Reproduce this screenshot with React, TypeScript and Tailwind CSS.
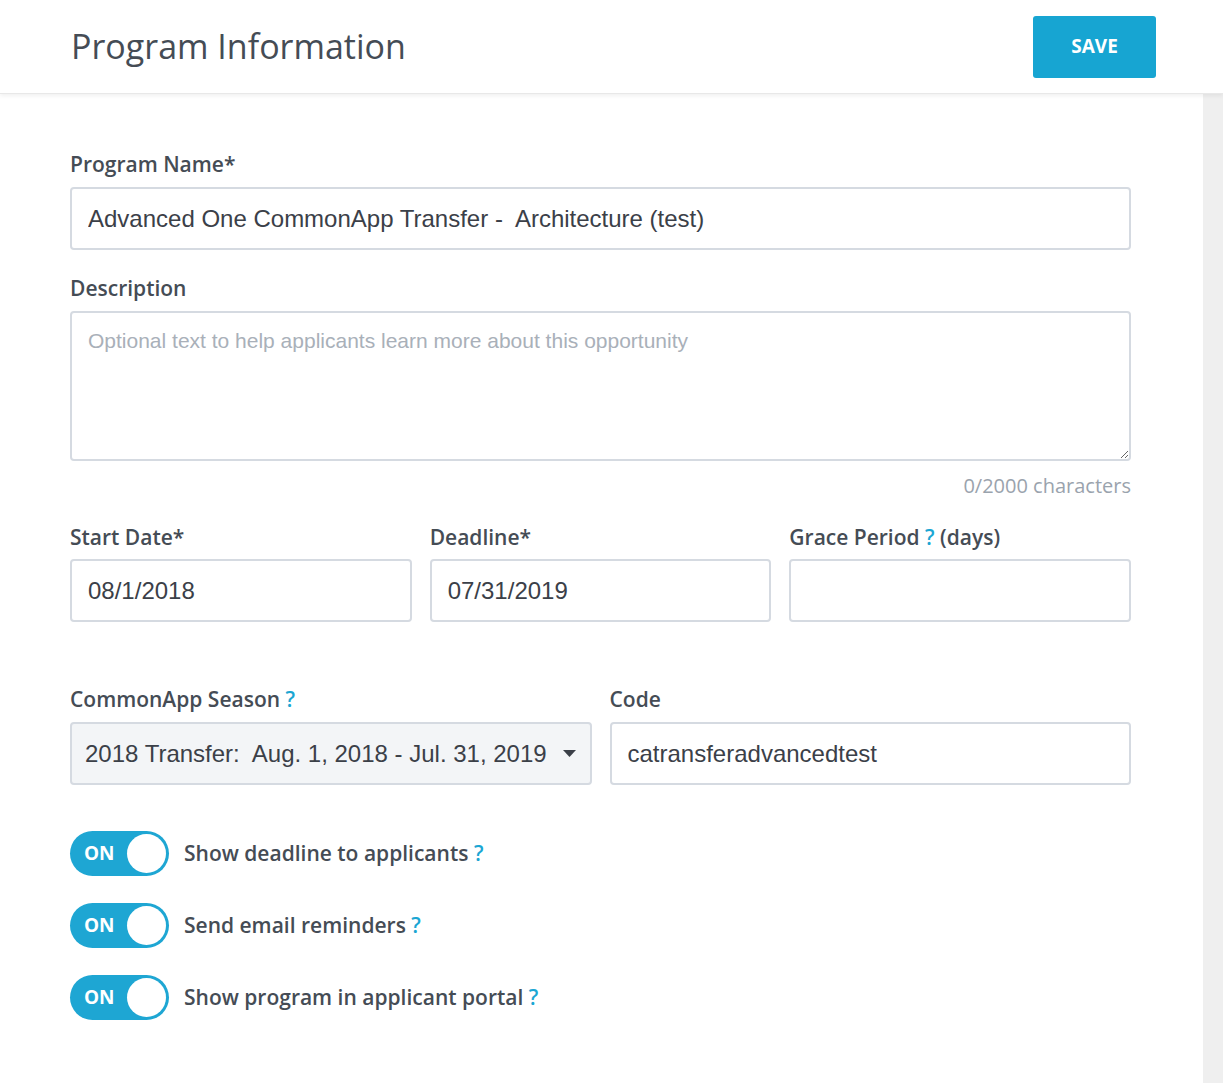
import React from "react";

const label = "text-[21px] font-semibold text-[#454c55] leading-[28px]";
const input =
  "h-[63px] w-full rounded-[4px] border-2 border-[#d5dae1] bg-white px-[16px] text-[24px] text-[#3b4048] outline-none";
const arial = { fontFamily: '"Liberation Sans", Arial, sans-serif' };
const q = <span className="text-[#1ba6d3]">?</span>;

function Toggle({ text }: { text: string }) {
  return (
    <div className="flex items-center gap-[15px]">
      <div className="flex h-[45px] w-[99px] items-center justify-between rounded-full bg-[#1ea6d3] pl-[14px] pr-[3px]">
        <span className="text-[19px] font-bold text-white">ON</span>
        <span className="h-[39px] w-[39px] rounded-full bg-white" />
      </div>
      <span className="text-[21px] font-semibold text-[#454c55]">
        {text} {q}
      </span>
    </div>
  );
}

export default function App() {
  return (
    <div
      className="flex min-h-[1083px] w-[1223px] flex-col bg-white"
      style={{ fontFamily: '"Open Sans", sans-serif' }}
    >
      <header className="relative z-10 flex h-[94px] items-center justify-between border-b border-[#e8e8e8] bg-white pl-[71px] pr-[67px] shadow-[0_2px_4px_rgba(0,0,0,0.06)]">
        <h1 className="text-[34px] font-normal text-[#454c55]">Program Information</h1>
        <button className="h-[62px] w-[123px] rounded-[3px] bg-[#17a5d2] text-[19px] font-bold text-white">
          SAVE
        </button>
      </header>
      <div className="flex flex-1">
        <main className="flex-1 pl-[70px] pr-[72px] pt-[56px] pb-[40px]">
          <div className={label}>Program Name*</div>
          <input
            className={`${input} mt-[9px]`}
            style={arial}
            defaultValue="Advanced One CommonApp Transfer -  Architecture (test)"
          />
          <div className={`${label} mt-[24px]`}>Description</div>
          <textarea
            className="mt-[9px] block h-[150px] w-full rounded-[4px] border-2 border-[#d5dae1] bg-white px-[16px] pt-[12px] text-[21px] text-[#3b4048] outline-none placeholder:text-[#a9b0b9]"
            style={arial}
            placeholder="Optional text to help applicants learn more about this opportunity"
          />
          <div className="mt-[10px] text-right text-[20px] text-[#9aa3ad]">0/2000 characters</div>
          <div className="mt-[22px] grid grid-cols-3 gap-[18px]">
            <div>
              <div className={label}>Start Date*</div>
              <input className={`${input} mt-[8px]`} style={arial} defaultValue="08/1/2018" />
            </div>
            <div>
              <div className={label}>Deadline*</div>
              <input className={`${input} mt-[8px]`} style={arial} defaultValue="07/31/2019" />
            </div>
            <div>
              <div className={label}>
                Grace Period {q} (days)
              </div>
              <input className={`${input} mt-[8px]`} style={arial} defaultValue="" />
            </div>
          </div>
          <div className="mt-[63px] grid grid-cols-2 gap-[18px]">
            <div>
              <div className={label}>CommonApp Season {q}</div>
              <div
                className="mt-[9px] flex h-[63px] items-center justify-between rounded-[4px] border-2 border-[#d5dae1] bg-[#f3f5f7] pl-[13px] pr-[14px] text-[24px] text-[#3b4048]"
                style={arial}
              >
                <span className="whitespace-pre">2018 Transfer:  Aug. 1, 2018 - Jul. 31, 2019</span>
                <svg width="13" height="8" viewBox="0 0 13 8">
                  <path d="M0 0h13L6.5 7z" fill="#3b4048" />
                </svg>
              </div>
            </div>
            <div>
              <div className={label}>Code</div>
              <input
                className={`${input} mt-[9px]`}
                style={arial}
                defaultValue="catransferadvancedtest"
              />
            </div>
          </div>
          <div className="mt-[46px] flex flex-col gap-[27px]">
            <Toggle text="Show deadline to applicants" />
            <Toggle text="Send email reminders" />
            <Toggle text="Show program in applicant portal" />
          </div>
        </main>
        <aside className="w-[20px] self-stretch bg-[#efefef]" />
      </div>
    </div>
  );
}
